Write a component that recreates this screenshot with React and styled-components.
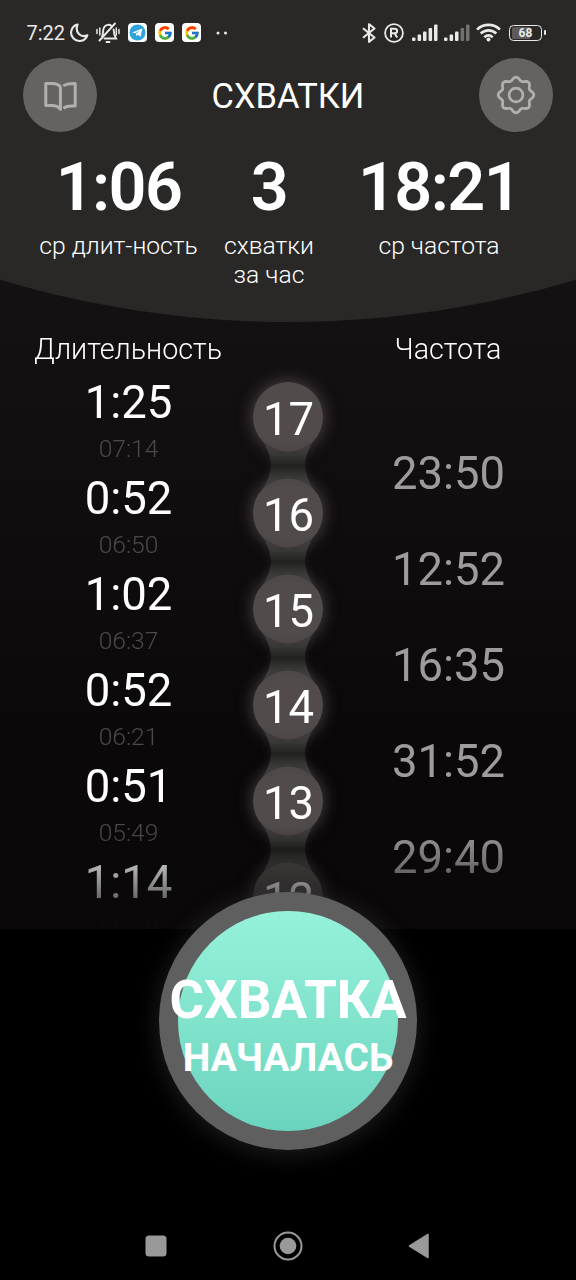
import React from "react";
import styled, { createGlobalStyle, css } from "styled-components";
import { FcGoogle } from "react-icons/fc";

const GlobalStyle = createGlobalStyle`
  *, *::before, *::after { box-sizing: border-box; }
  body { margin: 0; background: #000; font-family: Roboto, "Noto Sans", sans-serif; color: #fff; }
  svg { display: block; }
`;

const Screen = styled.main`
  width: 576px;
  height: 1280px;
  overflow: hidden;
  display: flex;
  flex-direction: column;
  background: linear-gradient(#161213 260px, #120e0f 480px, #0a0809 760px, #0a0809 929px);
`;

const Header = styled.header`
  height: 322px;
  flex: none;
  background: #292826;
  clip-path: circle(1000px at 50% calc(100% - 1000px));
`;

const StatusBar = styled.div`
  height: 58px;
  padding: 7px 29px 0 26.5px;
  display: flex;
  align-items: center;
  justify-content: space-between;
  color: #e9e9e8;
`;

const StatusGroup = styled.div`
  display: flex;
  align-items: center;
`;

const Clock = styled.span`
  font-size: 20px;
  line-height: 24px;
  width: 42.5px;
`;

const AppBadge = styled.span`
  width: 19px;
  height: 19px;
  margin-right: 8px;
  border-radius: 4px;
  background: #fff;
  display: grid;
  place-items: center;
`;

const TitleBar = styled.div`
  height: 74px;
  padding: 0 23px;
  display: flex;
  align-items: center;
  justify-content: space-between;
`;

const Title = styled.h1`
  margin: 2px 0 0;
  font-size: 34.4px;
  font-weight: 400;
  line-height: 40px;
`;

const RoundButton = styled.button`
  width: 74px;
  height: 74px;
  padding: 0;
  border: 0;
  border-radius: 50%;
  background: #646362;
  color: #b1b0af;
  display: grid;
  place-items: center;
`;

const Stats = styled.div`
  display: grid;
  grid-template-columns: 193px 108px 232px;
  padding: 15px 21px 0 22px;
  text-align: center;
`;

const StatValue = styled.div`
  font-size: 66.5px;
  font-weight: 600;
  letter-spacing: -1.6px;
  line-height: 80px;
`;

const StatLabel = styled.div`
  margin-top: 4px;
  font-size: 24.7px;
  font-weight: 300;
  line-height: 29px;
  white-space: pre-line;
`;

const History = styled.section`
  height: 607px;
  flex: none;
  overflow: hidden;
  padding-top: 10px;
  mask-image: linear-gradient(
    #000 505px,
    rgba(0, 0, 0, 0.7) 544px,
    rgba(0, 0, 0, 0.4) 576px,
    rgba(0, 0, 0, 0.1) 592px,
    rgba(0, 0, 0, 0.04) 607px
  );
`;

const columns = css`
  display: grid;
  grid-template-columns: 256px 64px 256px;
`;

const ColumnTitles = styled.div`
  ${columns}
  height: 37px;
  font-size: 28.7px;
  font-weight: 300;
  line-height: 34px;
  text-align: center;
`;

const ColumnTitle = styled.span`
  grid-column: ${(p) => p.$column};
`;

const Row = styled.div`
  ${columns}
  height: 96px;
  text-align: center;
`;

const Duration = styled.div`
  font-size: 45.5px;
  line-height: 54px;
  padding: 7px 0 0 1px;
`;

const StartTime = styled.div`
  font-size: 24.6px;
  font-weight: 300;
  line-height: 30px;
  margin-top: 4px;
  padding-left: 1px;
  color: #4c494a;
`;

const Marker = styled.div`
  display: flex;
  flex-direction: column;
  align-items: center;
  padding-top: 13px;
`;

const Bubble = styled.div`
  width: 70px;
  height: 70px;
  flex: none;
  border-radius: 50%;
  background: #514c4b;
  box-shadow: 0 0 14px 3px rgba(104, 96, 96, 0.5);
  font-size: 45.5px;
  line-height: 75px;
  padding-left: 1px;
`;

const Link = styled.svg`
  flex: none;
  margin: -10px 0;
  position: relative;
  filter: drop-shadow(0 0 4px rgba(50, 50, 48, 0.4));
`;

const Interval = styled.div`
  padding: 78px 0 0 1px;
  font-size: 45.4px;
  line-height: 54px;
  color: #9d9b9c;
`;

const Footer = styled.footer`
  flex: 1;
  display: flex;
  flex-direction: column;
  align-items: center;
  justify-content: space-between;
  background: #000;
`;

const StartButton = styled.button`
  position: relative;
  width: 258px;
  height: 258px;
  margin-top: -37px;
  padding: 16px 0 0;
  border: 19px solid transparent;
  border-radius: 50%;
  background:
    linear-gradient(#96f2da, #6bd4be) padding-box,
    linear-gradient(#5f5f5f, #5f5f5f) border-box;
  box-shadow: 0 3px 24px 1px rgba(100, 100, 100, 0.3);
  color: #fff;
  font-family: inherit;
  font-weight: 700;
  white-space: nowrap;
  display: flex;
  flex-direction: column;
  align-items: center;
  justify-content: center;
`;

const StartLine = styled.span`
  font-size: ${(p) => p.$size}px;
  line-height: 58px;
`;

const NavBar = styled.nav`
  width: 100%;
  height: 69px;
  padding: 0 146px 0 145px;
  display: flex;
  align-items: center;
  justify-content: space-between;
  color: #999;
`;

const gearPath =
  Array.from({ length: 145 }, (_, i) => {
    const a = (i / 144) * Math.PI * 2;
    const r = 16.2 + 1.6 * Math.cos(8 * a);
    return `${i ? "L" : "M"}${(20 + r * Math.cos(a)).toFixed(2)} ${(20 + r * Math.sin(a)).toFixed(2)}`;
  }).join("") + "Z";

const BookIcon = () => (
  <svg width="36" height="34" viewBox="0 0 36 34" fill="none" stroke="currentColor" strokeWidth="3" strokeLinejoin="round">
    <path d="M3.8 5.400H9.500C14 5.400 17.600 6.800 18.400 9.400V31.300C16.500 28.700 13 27.600 9.500 27.600H3.800Z" />
    <path d="M21.300 8.200C23 6 26 5.400 33.200 5.400V28H29.500C26 28 23.500 28.600 21.300 30.200" />
  </svg>
);

const GearIcon = () => (
  <svg width="40" height="40" viewBox="0 0 40 40" fill="none" stroke="currentColor" strokeWidth="2.8">
    <path d={gearPath} />
    <circle cx="20" cy="20" r="6.9" />
  </svg>
);

const MoonIcon = () => (
  <svg width="20" height="20" viewBox="0 0 20 20" fill="none" stroke="currentColor" strokeWidth="2.100" strokeLinejoin="round">
    <path d="M8.500 1.600A8.300 8.300 0 1 0 18.300 12.300C12 15 5.500 9.500 8.500 1.600Z" />
  </svg>
);

const MutedIcon = () => (
  <svg width="24" height="22" viewBox="0 0 24 22" fill="none" stroke="currentColor" strokeWidth="1.9" strokeLinecap="round">
    <path d="M6 14.500C7.500 12 6.500 8 8 5.500C9.500 2.500 13.500 2 15.500 4M17.600 7.500C17.800 11 18 13 20 16.500H8.500M10.500 20H13.500M3.500 18.500L19 1.500" />
    <path d="M1 7.500V11.500M3.800 6V13M20.300 6V13M23 7.500V11.500" strokeWidth="1.500" />
  </svg>
);

const TelegramIcon = () => (
  <svg width="17" height="17" viewBox="0 0 17 17">
    <circle cx="8.500" cy="8.500" r="8" fill="#2fa4da" />
    <path d="M3.200 8.400L13.300 4.500L11.600 12.700L8.700 10.700L7.200 12.100L7 9.700L11.300 6.200L6 9.300Z" fill="#fff" />
  </svg>
);

const DotsIcon = () => (
  <svg width="12" height="4" viewBox="0 0 12 4" fill="currentColor">
    <circle cx="2" cy="2" r="1.500" />
    <circle cx="9.500" cy="2" r="1.500" />
  </svg>
);

const BluetoothIcon = () => (
  <svg width="14" height="20" viewBox="0 0 14 20" fill="none" stroke="currentColor" strokeWidth="2.100" strokeLinejoin="round">
    <path d="M1 5.200L12.500 14.500L7 18.800V1.200L12.500 5.500L1 14.800" />
  </svg>
);

const RoamingIcon = () => (
  <svg width="20" height="20" viewBox="0 0 20 20" fill="none" stroke="currentColor" strokeWidth="1.800">
    <circle cx="10" cy="10" r="8.900" />
    <path d="M7 14.500V5.800H10.500C14 5.800 14 10.300 10.500 10.300H7M10.500 10.300L13.200 14.500" strokeWidth="2" />
  </svg>
);

const bars = [
  [0, 3.5],
  [5.6, 6.5],
  [11, 9.5],
  [16.6, 13],
  [22, 16.5],
];

const SignalIcon = ({ level }) => (
  <svg width="26" height="17" viewBox="0 0 26 17" fill="currentColor">
    {bars.map(([x, h], i) => (
      <rect key={x} x={x} y={17 - h} width="3.500" height={h} rx="1" opacity={i < level ? 1 : 0.38} />
    ))}
  </svg>
);

const WifiIcon = () => (
  <svg width="25" height="19" viewBox="0 0 25 19" fill="none" stroke="currentColor" strokeWidth="2.600">
    <path d="M1 6.600C7.500 0.300 17.500 0.300 24 6.600" />
    <path d="M4.700 10.500C9.200 6.300 15.800 6.300 20.300 10.500" />
    <path d="M8.300 14.200C10.900 12 14.100 12 16.700 14.200" />
    <circle cx="12.500" cy="16.600" r="2" fill="currentColor" stroke="none" />
  </svg>
);

const Battery = styled.span`
  position: relative;
  width: 33px;
  height: 16px;
  border: 1.6px solid currentColor;
  border-radius: 4.5px;
  background: linear-gradient(90deg, #5c5b5a 64%, transparent 64%);
  background-clip: content-box;
  padding: 1px 2px;
  font-size: 12px;
  font-weight: 700;
  line-height: 13px;
  text-align: center;
  &::after {
    content: "";
    position: absolute;
    right: -4.500px;
    top: 4px;
    width: 2px;
    height: 5px;
    border-radius: 1px;
    background: currentColor;
  }
`;

const Spacer = styled.span`
  width: ${(p) => p.$w}px;
`;

const stats = [
  { value: "1:06", label: "ср длит-ность" },
  { value: "3", label: "схватки\nза час" },
  { value: "18:21", label: "ср частота" },
];

const contractions = [
  { n: 17, duration: "1:25", time: "07:14", interval: "23:50" },
  { n: 16, duration: "0:52", time: "06:50", interval: "12:52" },
  { n: 15, duration: "1:02", time: "06:37", interval: "16:35" },
  { n: 14, duration: "0:52", time: "06:21", interval: "31:52" },
  { n: 13, duration: "0:51", time: "05:49", interval: "29:40" },
  { n: 12, duration: "1:14", time: "05:18" },
];

const LinkShape = () => (
  <Link width="56" height="46" viewBox="0 0 56 46">
    <defs>
      <linearGradient id="link" x1="0" y1="0" x2="0" y2="1">
        <stop offset="0.1" stopColor="#403f3e" />
        <stop offset="0.3" stopColor="#353634" />
        <stop offset="0.52" stopColor="#21221f" />
        <stop offset="0.72" stopColor="#353634" />
        <stop offset="0.9" stopColor="#403f3e" />
      </linearGradient>
      <mask id="gap">
        <rect width="56" height="46" fill="#fff" />
        <circle cx="28" cy="-25" r="35" fill="#000" />
        <circle cx="28" cy="71" r="35" fill="#000" />
      </mask>
    </defs>
    <path d="M3 0C8 7 11 17 11 23C11 29 8 39 3 46H53C48 39 45 29 45 23C45 17 48 7 53 0Z" fill="url(#link)" mask="url(#gap)" />
  </Link>
);

export default function App() {
  return (
    <Screen>
      <GlobalStyle />
      <Header>
        <StatusBar>
          <StatusGroup>
            <Clock>7:22</Clock>
            <MoonIcon />
            <Spacer $w={7} />
            <MutedIcon />
            <Spacer $w={8} />
            <AppBadge><TelegramIcon /></AppBadge>
            <AppBadge><FcGoogle size={16} /></AppBadge>
            <AppBadge><FcGoogle size={16} /></AppBadge>
            <Spacer $w={7} />
            <DotsIcon />
          </StatusGroup>
          <StatusGroup>
            <BluetoothIcon />
            <Spacer $w={8} />
            <RoamingIcon />
            <Spacer $w={8} />
            <SignalIcon level={5} />
            <Spacer $w={6} />
            <SignalIcon level={3} />
            <Spacer $w={6} />
            <WifiIcon />
            <Spacer $w={8} />
            <Battery>68</Battery>
            <Spacer $w={5} />
          </StatusGroup>
        </StatusBar>
        <TitleBar>
          <RoundButton aria-label="Журнал"><BookIcon /></RoundButton>
          <Title>СХВАТКИ</Title>
          <RoundButton aria-label="Настройки"><GearIcon /></RoundButton>
        </TitleBar>
        <Stats>
          {stats.map((s) => (
            <div key={s.value}>
              <StatValue>{s.value}</StatValue>
              <StatLabel>{s.label}</StatLabel>
            </div>
          ))}
        </Stats>
      </Header>
      <History>
        <ColumnTitles>
          <ColumnTitle $column={1}>Длительность</ColumnTitle>
          <ColumnTitle $column={3}>Частота</ColumnTitle>
        </ColumnTitles>
        {contractions.map((c, i) => (
          <Row key={c.n}>
            <div>
              <Duration>{c.duration}</Duration>
              <StartTime>{c.time}</StartTime>
            </div>
            <Marker>
              <Bubble>{c.n}</Bubble>
              {i < contractions.length - 1 && <LinkShape />}
            </Marker>
            <Interval>{c.interval}</Interval>
          </Row>
        ))}
      </History>
      <Footer>
        <StartButton>
          <StartLine $size={53}>СХВАТКА</StartLine>
          <StartLine $size={39}>НАЧАЛАСЬ</StartLine>
        </StartButton>
        <NavBar>
          <svg width="22" height="22" viewBox="0 0 22 22" fill="currentColor">
            <rect x="0.500" y="0.500" width="21" height="21" rx="3.500" />
          </svg>
          <svg width="30" height="30" viewBox="0 0 30 30" fill="currentColor">
            <circle cx="15" cy="15" r="13.500" fill="none" stroke="currentColor" strokeWidth="2" />
            <circle cx="15" cy="15" r="8.300" />
          </svg>
          <svg width="22" height="26" viewBox="0 0 22 26" fill="currentColor" stroke="currentColor" strokeWidth="1.500" strokeLinejoin="round">
            <path d="M1.500 13L20 1.500V24.500Z" />
          </svg>
        </NavBar>
      </Footer>
    </Screen>
  );
}
